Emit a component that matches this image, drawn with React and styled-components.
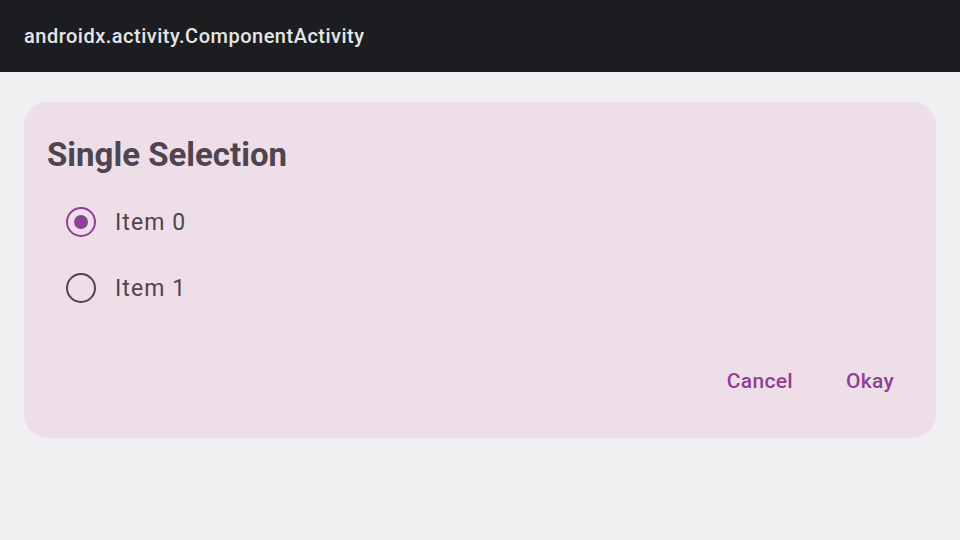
import { useState } from 'react';
import styled, { createGlobalStyle } from 'styled-components';

const Global = createGlobalStyle`
  html, body { margin: 0; padding: 0; }
  body {
    background: #f0eff2;
    font-family: Roboto, "Noto Sans", sans-serif;
  }
`;

const Page = styled.div`
  width: 960px;
  height: 540px;
  display: flex;
  flex-direction: column;
  background: #f0eff2;
`;

const TopBar = styled.header`
  height: 72px;
  background: #1b1d20;
  display: flex;
  align-items: center;
  padding: 0 24px;
  color: #e6e6e8;
  font-size: 20px;
  font-weight: 500;
  letter-spacing: 0.5px;
`;

const Content = styled.main`
  padding: 30px 24px 0;
`;

const Dialog = styled.section`
  background: #eedee7;
  border-radius: 24px;
  height: 336px;
  display: flex;
  flex-direction: column;
`;

const Title = styled.h2`
  margin: 0;
  padding: 34px 23px 0;
  font-size: 33px;
  line-height: 38px;
  font-weight: 700;
  color: #4f444f;
`;

const Options = styled.div`
  display: flex;
  flex-direction: column;
  padding: 15px 0 0 42px;
`;

const Option = styled.label`
  display: flex;
  align-items: center;
  height: 66px;
  gap: 19px;
  cursor: pointer;
  font-size: 23px;
  letter-spacing: 1.1px;
  color: #4f444f;
`;

const Radio = styled.span`
  width: 30px;
  height: 30px;
  box-sizing: border-box;
  border-radius: 50%;
  border: 2.5px solid ${({ $on }) => ($on ? '#8e3f96' : '#4f444f')};
  display: flex;
  align-items: center;
  justify-content: center;
  &::after {
    content: '';
    width: 14px;
    height: 14px;
    border-radius: 50%;
    background: #8e3f96;
    display: ${({ $on }) => ($on ? 'block' : 'none')};
  }
`;

const Actions = styled.div`
  display: flex;
  justify-content: flex-end;
  gap: 31px;
  padding: 40px 31px 0 0;
`;

const TextButton = styled.button`
  background: none;
  border: none;
  font-family: inherit;
  font-size: 21px;
  font-weight: 500;
  color: #8e3f96;
  padding: 8px 11px;
  letter-spacing: 0.3px;
  cursor: pointer;
`;

export default function App() {
  const [selected, setSelected] = useState(0);
  const items = ['Item 0', 'Item 1'];
  return (
    <Page>
      <Global />
      <TopBar>androidx.activity.ComponentActivity</TopBar>
      <Content>
        <Dialog>
          <Title>Single Selection</Title>
          <Options>
            {items.map((item, i) => (
              <Option key={item} onClick={() => setSelected(i)}>
                <Radio $on={selected === i} />
                {item}
              </Option>
            ))}
          </Options>
          <Actions>
            <TextButton>Cancel</TextButton>
            <TextButton>Okay</TextButton>
          </Actions>
        </Dialog>
      </Content>
    </Page>
  );
}
